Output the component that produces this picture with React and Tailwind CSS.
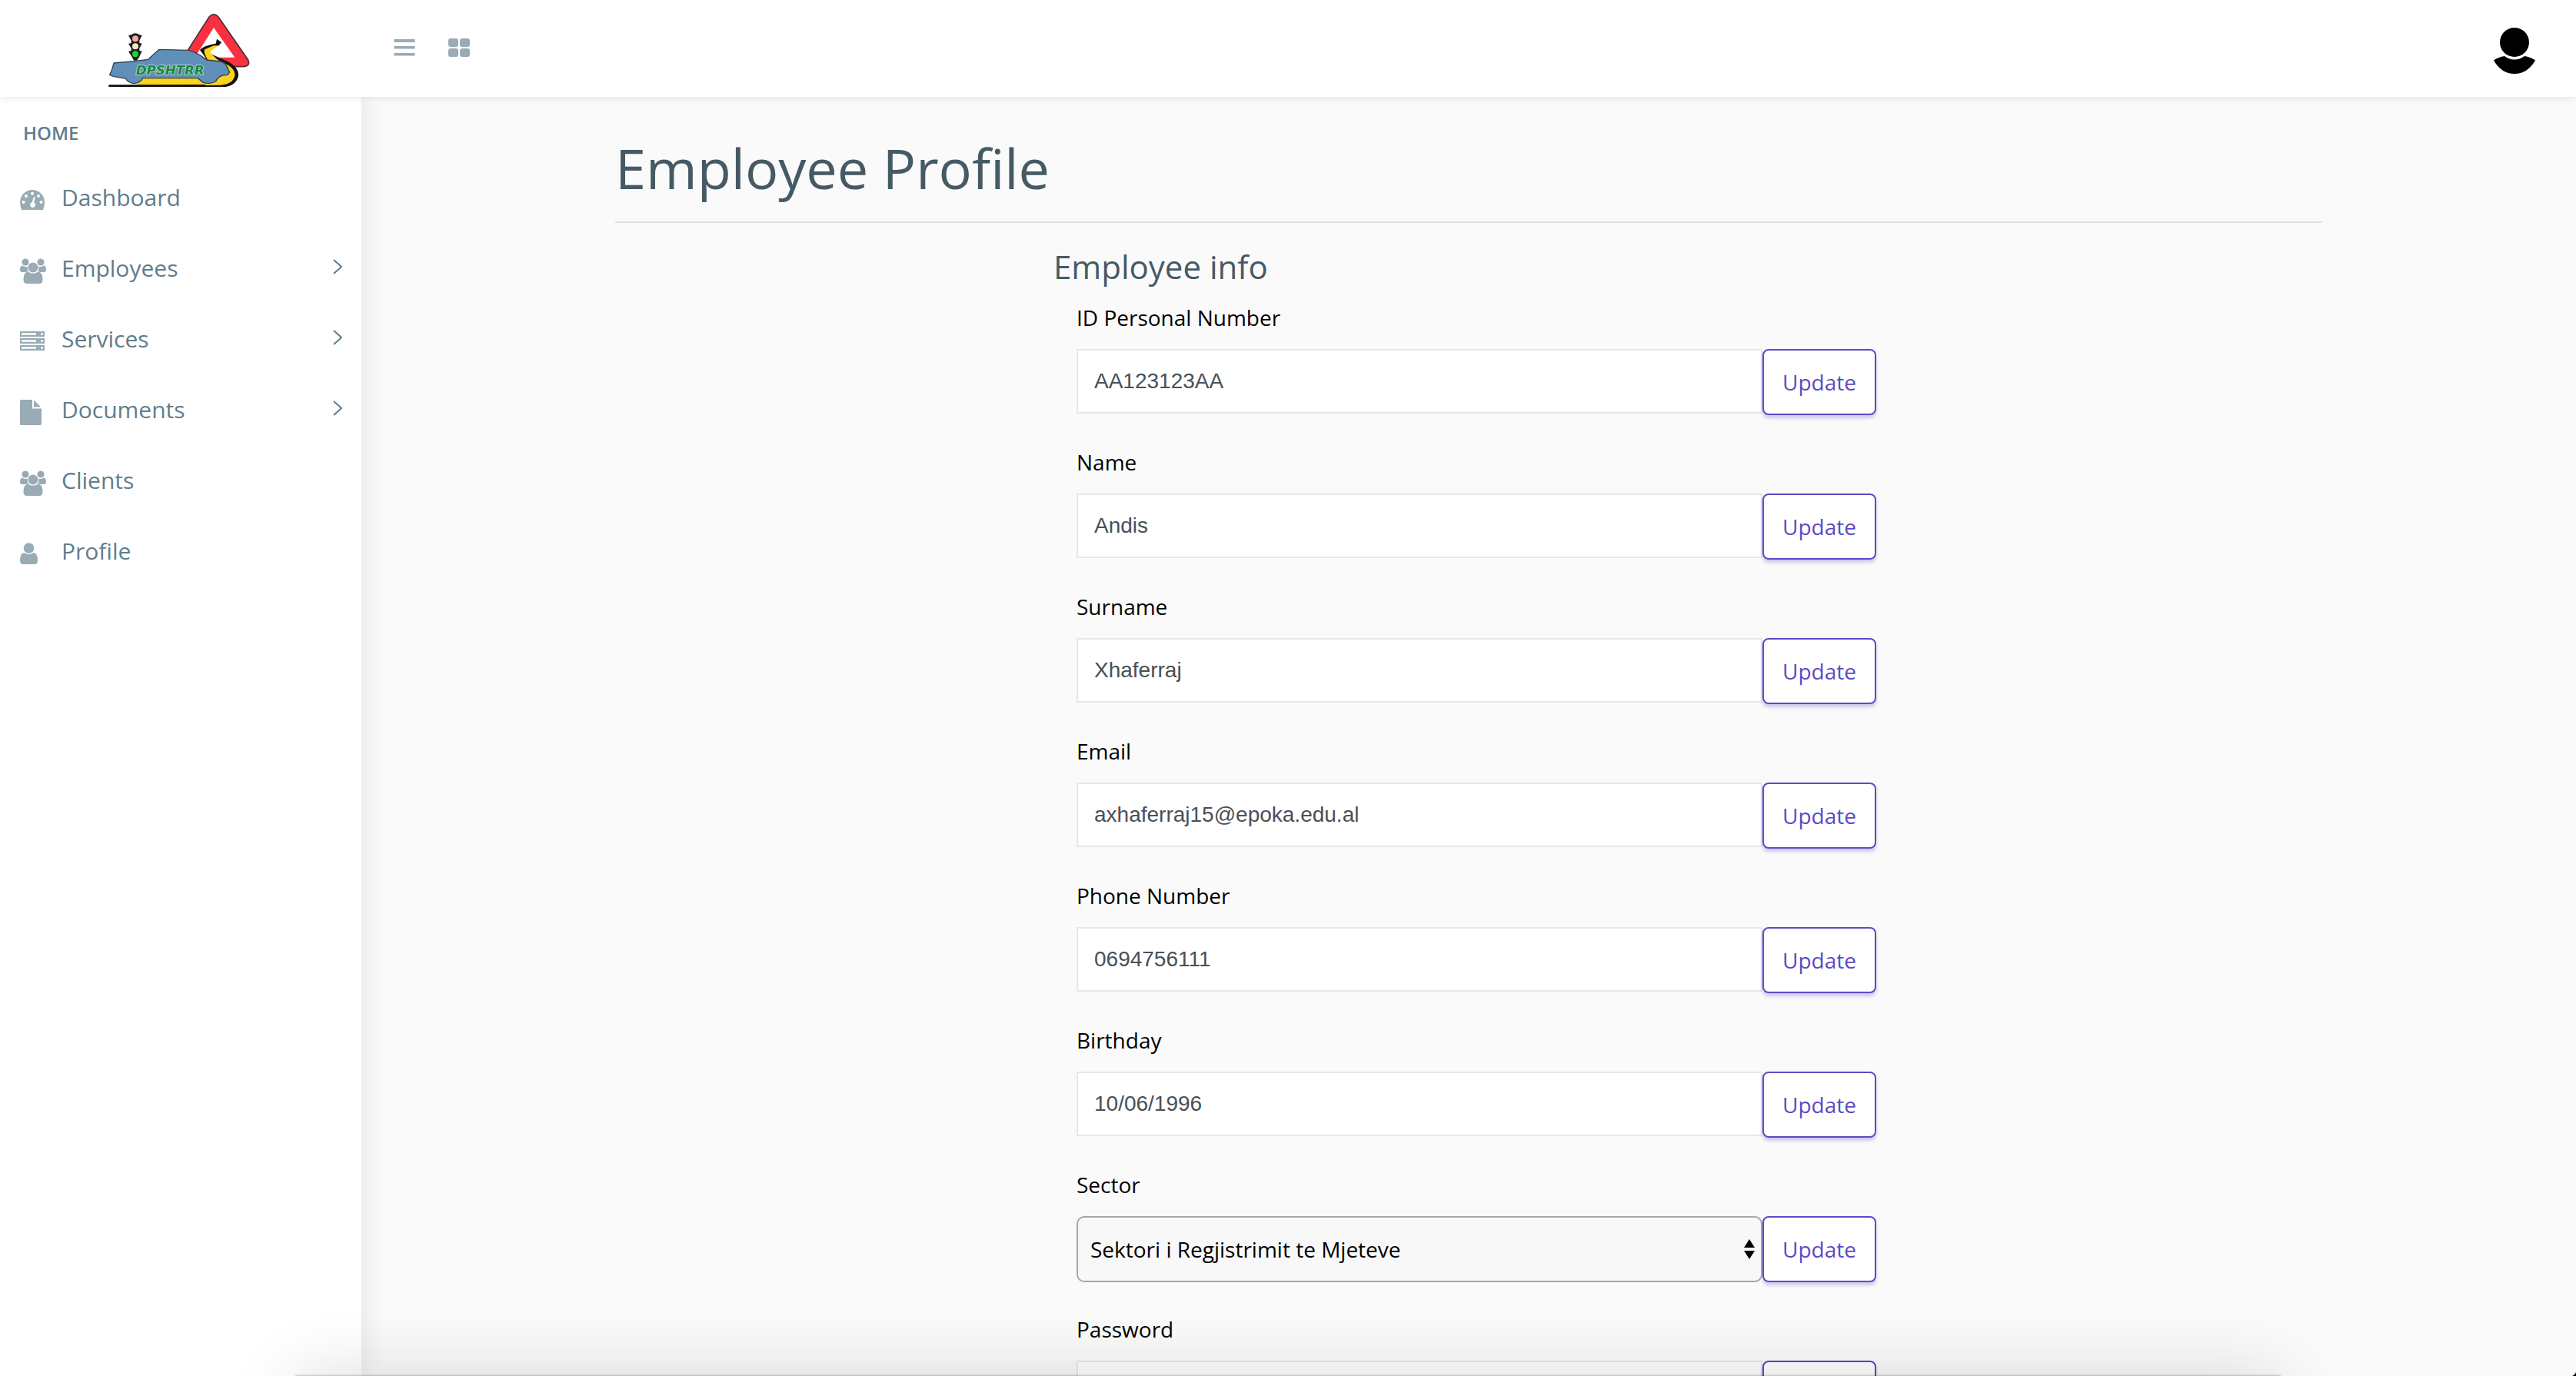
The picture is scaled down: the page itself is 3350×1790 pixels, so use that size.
const text = "font-['Open_Sans','Noto_Sans',sans-serif]";

function Logo() {
  return (
    <svg viewBox="0 0 660 378" className="h-[126px] w-[220px]" role="img" aria-label="DPSHTRR">
      <path d="M456 66 Q474 46 492 66 L608 234 Q618 256 592 260 L350 260 Q340 250 350 232 Z" fill="#f8303f" stroke="#4a3034" strokeWidth="5" />
      <path d="M474 108 L556 224 L400 224 Z" fill="#fff" />
      <path d="M180 306 L440 306 L470 326 L420 336 L172 336 Z" fill="#fcd31c" />
      <path d="M486 152 L504 165 L494 178 L462 190 Q446 200 470 214 L528 240 Q572 262 570 296 Q562 332 520 339 L64 339 L64 331 L470 330 Q528 316 530 270 L452 238 L420 196 Q428 180 482 170 Z" fill="#111" />
      <path d="M474 178 L440 192 Q430 198 452 236 L500 240 Q560 262 556 296 Q548 328 500 332 L440 333 L470 306 L520 290 L530 262 L486 230 L462 208 Q456 200 494 178 Z" fill="#fcd31c" />
      <path d="M84 246 L168 238 L218 232 L260 193 L376 196 Q412 206 446 234 L502 240 Q522 246 526 262 L536 282 L528 292 L508 294 Q490 300 482 318 Q462 330 432 322 L412 305 L198 305 Q186 324 162 326 Q138 322 130 306 L82 298 L68 292 L76 274 Z" fill="#608fb9" stroke="#34434f" strokeWidth="4" />
      <g fill="#1c1c1c">
        <path d="M152 136 Q168 124 184 136 L194 138 L184 158 L184 168 L194 170 L184 188 L184 198 L194 200 L182 224 L174 236 L162 236 L156 224 L141 200 L152 198 L152 188 L141 170 L152 168 L152 158 L141 138 Z" />
      </g>
      <circle cx="168" cy="151" r="12" fill="#f3a9a5" />
      <circle cx="168" cy="181" r="12" fill="#f3edb5" />
      <circle cx="168" cy="211" r="12" fill="#18d836" />
      <text x="170" y="290" fontSize="50" fontFamily="DejaVu Sans" fontWeight="bold" fontStyle="italic" fill="#12883c" stroke="#c4dfdc" strokeWidth="5" paintOrder="stroke">DPSHTRR</text>
    </svg>
  );
}

const GaugeIcon = () => (
  <svg viewBox="0 0 32 26" className="h-[26px] w-8" fill="currentColor">
    <path fillRule="evenodd" d="M16 0A16 16 0 0 1 32 16Q32 21 30 26H2Q0 21 0 16A16 16 0 0 1 16 0ZM16 2.700a2 2 0 1 0 0.010 0ZM8 6a2 2 0 1 0 0.010 0ZM24 6a2 2 0 1 0 0.010 0ZM4.500 14a2 2 0 1 0 0.010 0ZM27.500 14a2 2 0 1 0 0.010 0ZM17.800 9L19.800 9.500L18.200 16.300A3.500 3.500 0 1 1 15.800 16Z" />
  </svg>
);

const GroupIcon = () => (
  <svg viewBox="0 0 34 33" className="h-[33px] w-[34px]" fill="currentColor">
    <circle cx="7" cy="5" r="4.600" />
    <circle cx="27" cy="5" r="4.600" />
    <circle cx="17" cy="12" r="6.500" />
    <path d="M3 9.500Q7 12 9.800 10.500Q9 15 12 18H3Q0 18 0 15Q0 10 3 9.500Z" />
    <path d="M31 9.500Q27 12 24.200 10.500Q25 15 22 18H31Q34 18 34 15Q34 10 31 9.500Z" />
    <path d="M10.500 17.500Q17 22 23.500 17.500Q29.500 18 29.500 27.500Q29.500 33 25 33H9Q4.500 33 4.500 27.500Q4.500 18 10.500 17.500Z" stroke="#fff" strokeWidth="1" paintOrder="stroke" />
  </svg>
);

const ServerIcon = () => (
  <svg viewBox="0 0 32 26" className="h-[26px] w-8" fill="currentColor">
    <path fillRule="evenodd" d="M0 0H32V7H0ZM2 2.300V4.700H21V2.300ZM28.500 2a1.500 1.500 0 1 0 0.010 0ZM0 9H32V16H0ZM2 11.300V13.700H21V11.300ZM28.500 11a1.500 1.500 0 1 0 0.010 0ZM0 18H32V25H0ZM2 20.300V22.700H21V20.300ZM28.500 20a1.500 1.500 0 1 0 0.010 0Z" />
  </svg>
);

const FileIcon = () => (
  <svg viewBox="0 0 28 33" className="h-[33px] w-7" fill="currentColor">
    <path d="M1.500 0H16V11.500H28V31Q28 33 26.500 33H1.500Q0 33 0 31.500V1.500Q0 0 1.500 0Z" />
    <path d="M18 0.500L27 9.500H18Z" />
  </svg>
);

const UserIcon = () => (
  <svg viewBox="0 0 23 28" className="h-7 w-[23px]" fill="currentColor">
    <circle cx="11.500" cy="7" r="6.800" />
    <path d="M5.500 13Q11.500 17 17.500 13Q23 13.500 23 23Q23 28 19 28H4Q0 28 0 23Q0 13.500 5.500 13Z" />
  </svg>
);

const menu = [
  { name: "Dashboard", Icon: GaugeIcon },
  { name: "Employees", Icon: GroupIcon, more: true },
  { name: "Services", Icon: ServerIcon, more: true },
  { name: "Documents", Icon: FileIcon, more: true },
  { name: "Clients", Icon: GroupIcon },
  { name: "Profile", Icon: UserIcon },
];

const fields = [
  { id: "pid", label: "ID Personal Number", value: "AA123123AA" },
  { id: "name", label: "Name", value: "Andis" },
  { id: "surname", label: "Surname", value: "Xhaferraj" },
  { id: "email", label: "Email", value: "axhaferraj15@epoka.edu.al" },
  { id: "phone", label: "Phone Number", value: "0694756111" },
  { id: "birthday", label: "Birthday", value: "10/06/1996" },
  { id: "sector", label: "Sector", value: "Sektori i Regjistrimit te Mjeteve", select: true },
  { id: "password", label: "Password", value: "", type: "password" },
];

function Field({ id, label, value, select, type = "text" }) {
  return (
    <div className="h-[188px]">
      <label htmlFor={id} className="block h-[62px] text-[28px] leading-[42px] text-black">{label}</label>
      <div className="flex items-start">
        {select ? (
          <div className="relative flex-1">
            <select id={id} defaultValue={value} className="h-[86px] w-full appearance-none rounded-[10px] border-2 border-[#a6a6a6] bg-[#f8f8f8] px-4 text-[28px] text-black">
              <option>{value}</option>
            </select>
            <svg viewBox="0 0 14 26" className="pointer-events-none absolute top-[30px] right-[10px] h-[26px] w-[14px]">
              <path d="M7 0L14 11H0ZM7 26L14 15H0Z" />
            </svg>
          </div>
        ) : (
          <input id={id} type={type} defaultValue={value} className="h-[84px] min-w-0 flex-1 border-2 border-[#e7e7e7] bg-white px-[21px] font-['Liberation_Sans',Arial,sans-serif] text-[28px] text-[#495057]" />
        )}
        <button type="button" className="h-[86px] w-[148px] rounded-lg border-2 border-[#5c4ac7] bg-white text-[28px] text-[#5c4ac7] shadow-[0_4px_4px_rgba(92,74,199,0.28)]">Update</button>
      </div>
    </div>
  );
}

export default function App() {
  return (
    <div className={`relative flex h-screen flex-col overflow-hidden bg-[#fafafa] ${text}`}>
      <header className="relative z-10 flex h-[126px] shrink-0 items-center bg-white shadow-[0_0_10px_rgba(0,0,0,0.12)]">
        <div className="flex w-[470px] shrink-0 justify-center pr-[10px]"><Logo /></div>
        <div className="flex flex-1 items-center pb-[2px] pl-[42px] text-[#99abb4]">
          <button type="button" aria-label="Toggle menu">
            <svg viewBox="0 0 28 24" className="h-6 w-7" fill="currentColor"><path d="M0.500 1H27.500V5H0.500ZM0.500 10H27.500V13.500H0.500ZM0.500 19H27.500V22.500H0.500Z" /></svg>
          </button>
          <button type="button" aria-label="Apps" className="ml-[43px]">
            <svg viewBox="0 0 28 24" className="h-6 w-7" fill="currentColor">
              <rect width="13" height="11" rx="3" /><rect x="15" width="13" height="11" rx="3" />
              <rect y="13" width="13" height="11" rx="3" /><rect x="15" y="13" width="13" height="11" rx="3" />
            </svg>
          </button>
        </div>
        <button type="button" aria-label="Account" className="mt-[6px] mr-[53px]">
          <svg viewBox="0 0 54 60" className="h-[60px] w-[54px]">
            <circle cx="27" cy="19" r="19" />
            <path d="M14 37Q27 46 40 37Q48 38 54 42.500Q44 60 27 60Q10 60 0 42.500Q6 38 14 37Z" />
          </svg>
        </button>
      </header>
      <div className="flex min-h-0 flex-1">
        <aside className="w-[470px] shrink-0 bg-white shadow-[2px_0_32px_rgba(0,0,0,0.1)]">
          <h2 className="px-[30px] pt-[26px] pb-[18px] text-[24px] leading-[42px] font-semibold text-[#607d8b]">HOME</h2>
          <nav>
            {menu.map(({ name, Icon, more }) => (
              <a key={name} href="#" className="flex h-[92px] items-center pr-[25px] pl-[26px] text-[30px] text-[#607d8b]">
                <span className="flex w-[54px] pt-1 text-[#99abb4]"><Icon /></span>
                <span className="flex-1 pb-1">{name}</span>
                {more && <svg viewBox="0 0 12 20" className="mb-[6px] h-5 w-3" fill="none" stroke="currentColor" strokeWidth="2"><path d="M1 1L11 10L1 19" /></svg>}
              </a>
            ))}
          </nav>
        </aside>
        <main className="flex-1 px-[30px]">
          <div className="mx-auto max-w-[2220px]">
            <h1 className="border-b-2 border-[#e1e1e1] pt-[38px] pb-[16px] text-[72px] leading-[108px] text-[#455a64]">Employee Profile</h1>
            <form className="mx-auto mt-[26px] max-w-[1080px]">
              <h2 className="text-[42px] leading-[62px] text-[#455a64]">Employee info</h2>
              <div className="mt-[14px] pr-[10px] pl-[30px]">
                {fields.map((f) => <Field key={f.id} {...f} />)}
              </div>
            </form>
          </div>
        </main>
      </div>
      <div className="pointer-events-none absolute inset-x-[384px] -bottom-[40px] z-20 h-10 shadow-[0_10px_90px_rgba(0,0,0,0.24),0_0_3px_rgba(0,0,0,0.4)]" />
      <div className="pointer-events-none absolute right-0 bottom-0 z-20 size-2 bg-[radial-gradient(circle_at_top_left,transparent_8px,#000_9px)]" />
    </div>
  );
}
